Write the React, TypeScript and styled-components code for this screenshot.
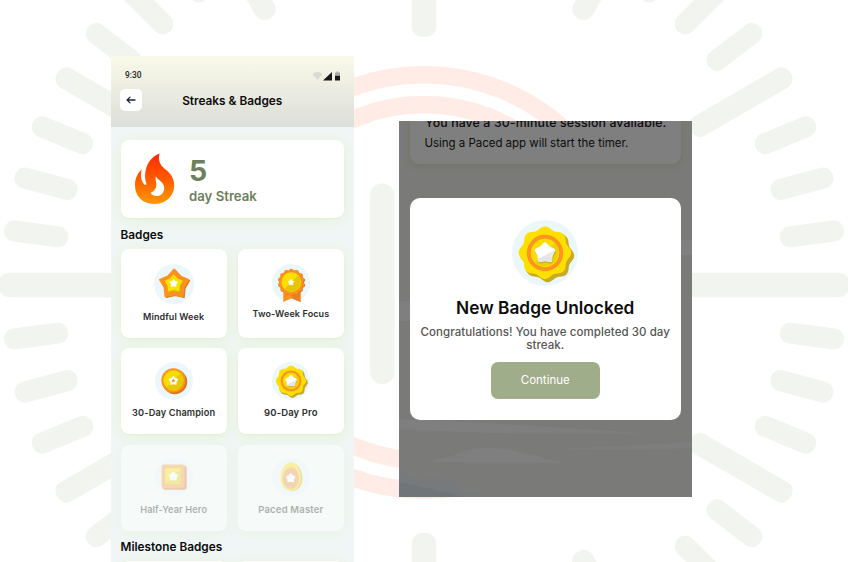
import React from 'react'
import styled, { createGlobalStyle } from 'styled-components';

const GlobalStyle = createGlobalStyle`
    * { box-sizing: border-box; }
    body {
        margin: 0;
        background: #fff;
        font-family: Inter, "Liberation Sans", sans-serif;
        color: #111;
    }
    h1, h2, p { margin: 0; }
`

const Page = styled.main`
    position: relative;
    display: flex;
    align-items: flex-start;
    gap: 45px;
    width: 848px;
    height: 562px;
    padding: 56px 0 0 111px;
    overflow: hidden;
`
const Backdrop = styled.svg`
    position: absolute;
    inset: 0;
`
const Phone = styled.section`
    position: relative;
    width: 243px;
    height: 506px;
    overflow: hidden;
    background: #f0f6f5;
`
const Header = styled.header`
    height: 71px;
    padding: 14px 14px 0 9px;
    background: linear-gradient(#fafaea, #ecede1 45%, #dcded9);
`
const StatusBar = styled.div`
    display: flex;
    justify-content: space-between;
    height: 11px;
    padding-left: 5px;
    font: 500 8.4px/11px Roboto, sans-serif;
    color: #1d1d1d;
`
const TitleBar = styled.div`
    display: grid;
    grid-template-columns: 22px 1fr 17.5px;
    align-items: center;
    height: 22px;
    margin-top: 8px;
`
const BackButton = styled.button`
    display: grid;
    place-items: center;
    width: 22px;
    height: 22px;
    padding: 0;
    border: 0;
    border-radius: 5px;
    background: #fff;
`
const ScreenTitle = styled.h1`
    padding-top: 2px;
    font-size: 11.85px;
    line-height: 16px;
    font-weight: 600;
    text-align: center;
    color: #0c0c0c;
`
const Content = styled.div`
    padding: 13px 10px 0 9.5px;
`
const Card = styled.div`
    border-radius: 8px;
    background: #fff;
    box-shadow: 0 1px 1px rgba(190, 215, 170, 0.16), 0 2px 12px rgba(228, 242, 205, 0.85);
`
const StreakCard = styled(Card)`
    display: flex;
    gap: 14.5px;
    height: 78px;
    padding: 13px 14.5px;
`
const StreakText = styled.div`
    padding-top: 1px;
    color: #6d7f5c;
    font-weight: 600;
`
const StreakCount = styled.p`
    font-size: 28.5px;
    line-height: 34px;
    font-weight: 700;
`
const StreakUnit = styled.p`
    font-size: 13.2px;
    line-height: 17px;
`
const SectionTitle = styled.h2<{ $top: number }>`
    margin-top: ${p => p.$top}px;
    font-size: 11.8px;
    line-height: 15px;
    font-weight: 600;
    color: #0c0c0c;
`
const BadgeGrid = styled.div`
    display: grid;
    grid-template-columns: 1fr 1fr;
    grid-template-rows: 89px 86px 86px;
    gap: 10.5px 11px;
    margin-top: 6.4px;
`
const BadgeCard = styled(Card)<{ $locked?: boolean; $top: number }>`
    display: flex;
    flex-direction: column;
    align-items: center;
    padding-top: ${p => p.$top}px;
    ${p => p.$locked && `
        background: #f6faf8;
        box-shadow: 0 2px 10px rgba(224, 241, 200, 0.35);
        & > * { opacity: 0.36; }
    `}
`
const BadgeName = styled.p<{ $gap: number; $size: number; $tracking: number }>`
    margin-top: ${p => p.$gap}px;
    font-size: ${p => p.$size}px;
    letter-spacing: ${p => p.$tracking}px;
    line-height: 12px;
    font-weight: 600;
    color: #2e2e2e;
    white-space: nowrap;
`
const Icon = styled.svg`
    display: block;
    flex: none;
    overflow: visible;
`
const Screen = styled.section`
    position: relative;
    width: 293px;
    height: 376px;
    margin-top: 65px;
    padding: 0 11.5px 0 11px;
    overflow: hidden;
    background: #7a7a78;
`
const Clouds = styled.svg`
    position: absolute;
    inset: 0;
`
const SessionCard = styled.div`
    position: relative;
    height: 42.5px;
    padding-left: 14.5px;
    border-radius: 0 0 9px 9px;
    background: #7f7f7f;
    box-shadow: 0 2px 6px rgba(110, 112, 92, 0.5);
    white-space: nowrap;
    color: #0d0d0d;
`
const SessionTitle = styled.p`
    height: 14px;
    padding-left: 0.5px;
    font-size: 12.3px;
    line-height: 3px;
    font-weight: 500;
    letter-spacing: 0.14px;
`
const SessionHint = styled.p`
    font-size: 11.5px;
    line-height: 16px;
    letter-spacing: -0.03px;
`
const Modal = styled.div`
    position: relative;
    display: flex;
    flex-direction: column;
    align-items: center;
    height: 221.5px;
    margin-top: 34.5px;
    padding: 21.5px 4px 0;
    border-radius: 10px;
    background: #fff;
    text-align: center;
`
const ModalTitle = styled.h2`
    margin-top: 10px;
    font-size: 17.3px;
    line-height: 24px;
    font-weight: 600;
    color: #0c0c0c;
`
const ModalText = styled.p`
    margin-top: 6px;
    font-size: 11.5px;
    line-height: 13.5px;
    font-weight: 500;
    letter-spacing: 0.07px;
    color: #555;
`
const ContinueButton = styled.button`
    width: 109px;
    height: 36.5px;
    margin-top: 9.5px;
    padding: 0;
    border: 0;
    border-radius: 7px;
    background: #a0ad8a;
    color: #fff;
    font: 400 11.5px/36px Inter, sans-serif;
`

type BadgeKind = 'star' | 'ribbon' | 'coin' | 'seal' | 'square' | 'egg';

interface Badge {
    name: string;
    kind: BadgeKind;
    size: number;
    top: number;
    gap: number;
    fontSize: number;
    tracking: number;
    locked?: boolean;
}

const badges: Badge[] = [
    { name: 'Mindful Week', kind: 'star', size: 40, top: 15, gap: 7, fontSize: 9, tracking: 0.1 },
    { name: 'Two-Week Focus', kind: 'ribbon', size: 38, top: 15, gap: 6, fontSize: 9, tracking: 0.13 },
    { name: '30-Day Champion', kind: 'coin', size: 38, top: 13.5, gap: 7.5, fontSize: 9.2, tracking: 0.14 },
    { name: '90-Day Pro', kind: 'seal', size: 38, top: 13.5, gap: 7.5, fontSize: 9.5, tracking: 0.12 },
    { name: 'Half-Year Hero', kind: 'square', size: 38, top: 13.5, gap: 7.5, fontSize: 9.2, tracking: 0.12, locked: true },
    { name: 'Paced Master', kind: 'egg', size: 38, top: 13.5, gap: 7.5, fontSize: 9.5, tracking: 0.18, locked: true },
];

// closed outline around (cx, cy) whose radius waves between r - amp and r + amp
const wavy = (cx: number, cy: number, r: number, amp: number, lobes: number) => {
    const points: string[] = [];
    for (let i = 0; i < 180; i++) {
        const a = (i / 180) * Math.PI * 2;
        const d = r + amp * Math.cos(a * lobes);
        points.push(`${(cx + d * Math.sin(a)).toFixed(2)},${(cy - d * Math.cos(a)).toFixed(2)}`);
    }
    return points.join(' ');
}

const starPoints = (cx: number, cy: number, outer: number, inner: number) =>
    Array.from({ length: 10 }, (_, i) => {
        const d = i % 2 ? inner : outer;
        const a = (i * Math.PI) / 5;
        return `${(cx + d * Math.sin(a)).toFixed(2)},${(cy - d * Math.cos(a)).toFixed(2)}`;
    }).join(' ');

interface StarProps { cx?: number; cy?: number; r: number; ratio?: number; fill: string; round?: number }

const Star = ({ cx = 33, cy = 33, r, ratio = 0.62, fill, round = 2 }: StarProps) => (
    <polygon points={starPoints(cx, cy, r, r * ratio)} fill={fill} stroke={fill} strokeWidth={round} strokeLinejoin="round" />
)

const BadgeArt = ({ kind }: { kind: BadgeKind }) => {
    switch (kind) {
        case 'star':
            return (
                <>
                    <Star cx={35} cy={35} r={25} ratio={0.68} fill="#e07a1c" round={2} />
                    <Star cx={33} cy={33.5} r={25} ratio={0.68} fill="#fb9220" round={2} />
                    <Star cx={33.5} cy={34} r={15} ratio={0.66} fill="#cfae08" />
                    <Star cx={32.5} cy={32.5} r={14.5} ratio={0.66} fill="#fbe000" />
                    <Star cx={32.5} cy={32} r={6.5} ratio={0.6} fill="#fff" round={1.5} />
                </>
            )
        case 'ribbon':
            return (
                <>
                    <path d="M19.5 40v26L34 59.5 49.5 66V40z" fill="#fb9220" />
                    <path d="M34 59.5L49.5 66V40H42z" fill="#e8811e" />
                    <polygon points={wavy(34.5, 32.5, 22.5, 1.2, 14)} fill="#e07a1c" />
                    <polygon points={wavy(33, 31.5, 22, 1.2, 14)} fill="#fb9220" />
                    <circle cx="33.5" cy="31.5" r="17" fill="#fbe000" />
                    <path d="M45.5 19.5A17 17 0 0 1 21.5 43.5z" fill="#e3c704" />
                    <Star cx={33} cy={32} r={5} fill="#fff" round={1.5} />
                </>
            )
        case 'coin':
            return (
                <>
                    <circle cx="34.5" cy="34.5" r="21.5" fill="#d97620" />
                    <circle cx="32" cy="32" r="21" fill="#fb9220" />
                    <circle cx="32" cy="32" r="17.5" fill="#fbdb00" />
                    <path d="M44.4 19.6A17.5 17.5 0 0 1 19.6 44.4z" fill="#e6c804" />
                    <Star cx={32} cy={32.5} r={7.5} fill="#fff" />
                    <Star cx={32} cy={32.5} r={2.5} fill="#f98a20" round={1} />
                </>
            )
        case 'seal':
            return (
                <>
                    <polygon points={wavy(35.7, 35.7, 25, 1.5, 8)} fill="#c9aa24" />
                    <polygon points={wavy(34.2, 34.2, 25, 1.5, 8)} fill="#c9aa24" />
                    <polygon points={wavy(32.9, 32.7, 24.8, 1.5, 8)} fill="#fde000" />
                    <circle cx="33" cy="33" r="16.2" fill="#fddc00" stroke="#fb9520" strokeWidth="4" />
                    <path d="M43 23A14.2 14.2 0 0 1 23 43z" fill="#ecd000" />
                    <Star cx={33.8} cy={34.6} r={8.6} ratio={0.7} fill="#cbb320" round={4} />
                    <Star cx={33} cy={33} r={8.6} ratio={0.7} fill="#fff" round={4} />
                    <path d="M43.2 30.2q.4.9-.5 1.8L39.3 35.3l1.2 5.500q-.3 1.800-2.200 1.300L33 40.800l-5 1.300q-2 .2-2.200-1.600l.2-1.500z" fill="#e5e5e5" />
                </>
            )
        case 'square':
            return (
                <>
                    <rect x="13" y="13" width="42" height="42" rx="5" fill="#dd7b2c" />
                    <rect x="11.5" y="11.5" width="40" height="40" rx="4" fill="#fb9a38" />
                    <rect x="18" y="18" width="27" height="27" rx="1" fill="#fbe000" />
                    <path d="M45 18v27H18z" fill="#e3cc10" />
                    <Star cx={32} cy={32} r={7} ratio={0.66} fill="#fff" round={3} />
                </>
            )
        case 'egg':
            return (
                <>
                    <path d="M35 9c11 0 18 15 18 27 0 13-8 21-18 21S18 49 18 36 24 9 35 9z" fill="#d0b010" />
                    <path d="M33 7.5c10.5 0 17 15 17 27.5S43 56 33 56 15 48 15 35 22.5 7.5 33 7.5z" fill="#fde000" />
                    <path d="M33 16c8 0 14 10 14 20s-6 17.5-14 17.5S19 46 19 36s6-20 14-20z" fill="#f39444" />
                    <Star cx={32.5} cy={35} r={7} ratio={0.66} fill="#fff" round={3} />
                </>
            )
    }
}

const BadgeIcon = ({ kind, size }: { kind: BadgeKind; size: number }) => (
    <Icon width={size} height={size} viewBox="0 0 66 66">
        <circle cx="33" cy="33" r="33" fill="#ecf7fb" />
        <BadgeArt kind={kind} />
    </Icon>
)

const Flame = () => (
    <Icon width="39.5" height="52" viewBox="60 54 119 155">
        <defs>
            <linearGradient id="flame" x1="0" y1="0" x2="0" y2="1">
                <stop offset="0" stopColor="#ff2a04" />
                <stop offset="0.5" stopColor="#ff5a00" />
                <stop offset="1" stopColor="#ff9a00" />
            </linearGradient>
        </defs>
        <path
            fill="url(#flame)"
            fillRule="evenodd"
            d="M134 55C129 72 134 90 150 101C168 113 179 132 178 152C177 185 152 207 119 207C85 207 60 184 60 150C60 132 67 114 80 103C76 120 78 138 87 147C91 151 96 149 94 144C86 122 92 90 108 73C116 64 125 58 134 55ZM123 123C119 136 128 144 123 157C119 166 113 170 107 173C112 184 132 187 142 176C151 166 149 152 142 143C135 135 126 131 123 123Z"
        />
    </Icon>
)

const StatusIcons = () => (
    <Icon width="28" height="11" viewBox="0 0 28 11">
        <path d="M.5 4Q5.500 0 10.500 4L5.500 10z" fill="#dbdcd1" />
        <path d="M20 2v8.500h-9z" fill="#191919" />
        <path d="M23 2.500h1.500v-1h2v1H28V6h-5z" fill="#a9aaa3" />
        <path d="M23 5.800h5v4.700h-5z" fill="#191919" />
    </Icon>
)

interface Tick { angle: number; from: number; to: number; width: number }

const ticks: Tick[] = [];
for (let i = 0; i < 48; i++) {
    const angle = i * 7.5;
    const quarter = i % 12 === 0;
    const hour = i % 4 === 0;
    ticks.push({
        angle,
        from: quarter ? 248 : hour ? 308 : 359,
        to: quarter ? 425 : 423.5,
        width: quarter ? 24.5 : hour ? 22 : 21,
    });
}

// faded clock mark behind both screens
const ClockMark = () => (
    <Backdrop width="848" height="562" viewBox="0 0 848 562">
        <g fill="none" stroke="#ffece6" strokeWidth="17.5">
            <circle cx="424" cy="282.5" r="207.7" />
            <circle cx="424" cy="282.5" r="178" />
        </g>
        <g fill="#f2f4ef">
            {ticks.map(t => (
                <rect
                    key={t.angle}
                    x={t.from}
                    y={-t.width / 2}
                    width={t.to - t.from}
                    height={t.width}
                    rx={10}
                    transform={`translate(424 285) rotate(${t.angle})`}
                />
            ))}
            <rect x="370" y="183.5" width="24.5" height="200.5" rx="12" />
        </g>
    </Backdrop>
)

const CloudLayer = () => (
    <Clouds width="293" height="376" viewBox="0 0 293 376">
        <path d="M0 180h11v20H0zM281 119q6-1 12 1v14h-12z" fill="#7f7f80" />
        <path d="M0 298q90 3 244 14.5Q90 314 0 308z" fill="#7f7f7f" />
        <path d="M29 341q12-4 27-7 12-8 40-7 22 2 29 6 18 1 20 5 12 1 20 4z" fill="#7f7f80" />
        <path d="M152 328q60-2 141-7v6q-50 3-141 1z" fill="#7e7e7e" />
        <path d="M0 351q10 0 18 8 18-5 33 0 12 5 9 12 18 0 30 5H0z" fill="#777a7c" />
        <path d="M0 362q22 2 42 9 10 1 22 5H0z" fill="#6f7579" />
    </Clouds>
)

function App() {
    return (
        <>
            <GlobalStyle />
            <Page>
                <ClockMark />
                <Phone>
                    <Header>
                        <StatusBar>
                            <span>9:30</span>
                            <StatusIcons />
                        </StatusBar>
                        <TitleBar>
                            <BackButton aria-label="Back">
                                <Icon width="10" height="8" viewBox="0 0 10 8" fill="none" stroke="#1b2638" strokeWidth="1.3" strokeLinecap="round" strokeLinejoin="round">
                                    <path d="M9 4H1.2M4 1.1L1.1 4 4 6.9" />
                                </Icon>
                            </BackButton>
                            <ScreenTitle>Streaks &amp; Badges</ScreenTitle>
                        </TitleBar>
                    </Header>
                    <Content>
                        <StreakCard>
                            <Flame />
                            <StreakText>
                                <StreakCount>5</StreakCount>
                                <StreakUnit>day Streak</StreakUnit>
                            </StreakText>
                        </StreakCard>
                        <SectionTitle $top={9.6}>Badges</SectionTitle>
                        <BadgeGrid>
                            {badges.map(b => (
                                <BadgeCard key={b.name} $locked={b.locked} $top={b.top}>
                                    <BadgeIcon kind={b.kind} size={b.size} />
                                    <BadgeName $gap={b.gap} $size={b.fontSize} $tracking={b.tracking}>{b.name}</BadgeName>
                                </BadgeCard>
                            ))}
                        </BadgeGrid>
                        <SectionTitle $top={9}>Milestone Badges</SectionTitle>
                        <BadgeGrid>
                            <Card />
                            <Card />
                        </BadgeGrid>
                    </Content>
                </Phone>
                <Screen>
                    <CloudLayer />
                    <SessionCard>
                        <SessionTitle>You have a 30-minute session available.</SessionTitle>
                        <SessionHint>Using a Paced app will start the timer.</SessionHint>
                    </SessionCard>
                    <Modal>
                        <BadgeIcon kind="seal" size={66} />
                        <ModalTitle>New Badge Unlocked</ModalTitle>
                        <ModalText>Congratulations! You have completed 30 day streak.</ModalText>
                        <ContinueButton>Continue</ContinueButton>
                    </Modal>
                </Screen>
            </Page>
        </>
    )
}

export default App;
